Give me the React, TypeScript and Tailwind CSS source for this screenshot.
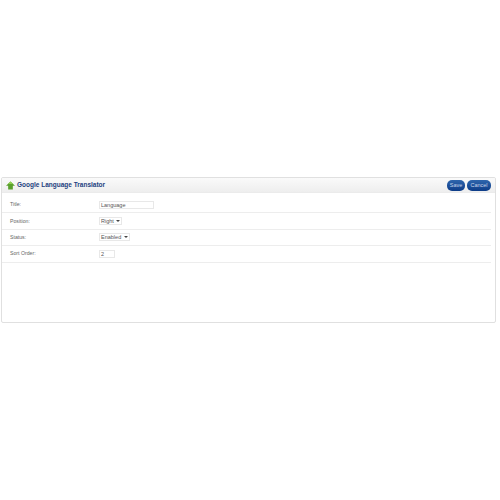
import React from 'react';

const Row = ({ label, children }: { label: string; children: React.ReactNode }) => (
  <div className="flex h-[16.4px] items-center border-b border-[#ededed] pl-[8px]">
    <div className="w-[89px] pt-[1px] text-[5.2px] text-[#666]">{label}</div>
    {children}
  </div>
);

const Select = ({ value, width }: { value: string; width: string }) => (
  <div className={`flex h-[8px] items-center justify-between border border-[#e8e8e8] bg-white pl-[1px] pr-[1px] text-[5.5px] text-[#555] ${width}`}>
    <span>{value}</span>
    <span className="h-0 w-0 border-x-[2px] border-t-[2px] border-x-transparent border-t-[#444]" />
  </div>
);

const Button = ({ label, width }: { label: string; width: string }) => (
  <div className={`flex h-[11px] items-center justify-center rounded-[5px] bg-gradient-to-b from-[#2f66ad] to-[#0d3c88] text-[5.5px] text-[#c8d6ea] ${width}`}>
    {label}
  </div>
);

export default function App() {
  return (
    <div className="h-[500px] w-[500px] bg-white pl-[1px] pt-[177px] font-['Liberation_Sans',Arial,sans-serif]">
      <div className="h-[146px] w-[495px] overflow-hidden rounded-[2px] border border-[#e0e0e0] bg-white">
        {/* Header */}
        <div className="flex h-[15px] items-center justify-between border-b border-[#ebebeb] bg-gradient-to-b from-[#fafafa] to-[#eeeeee] pl-[4px] pr-[4px]">
          <div className="flex items-center gap-[2px]">
            <svg width="9" height="9" viewBox="0 0 10 10">
              <path d="M5 0.5 L10 5.2 L7.6 5.2 L7.6 9.5 L2.4 9.5 L2.4 5.2 L0 5.2 Z" fill="#5aa02c" />
              <path d="M5 0.5 L8 3.4 L2 3.4 Z" fill="#8fcf4f" />
            </svg>
            <span className="text-[6.5px] font-bold text-[#1d3f7f]">Google Language Translator</span>
          </div>
          <div className="flex gap-[2px]">
            <Button label="Save" width="w-[18px]" />
            <Button label="Cancel" width="w-[24px]" />
          </div>
        </div>
        {/* Form */}
        <div className="pr-[4px] pt-[4px]">
          <Row label="Title:">
            <div className="flex h-[8px] w-[55px] items-center border border-[#e8e8e8] pl-[1px] text-[5.5px] text-[#555]">Language</div>
          </Row>
          <Row label="Position:">
            <Select value="Right" width="w-[23px]" />
          </Row>
          <Row label="Status:">
            <Select value="Enabled" width="w-[31px]" />
          </Row>
          <Row label="Sort Order:">
            <div className="flex h-[8px] w-[16px] items-center border border-[#e8e8e8] pl-[1px] text-[5.5px] text-[#555]">2</div>
          </Row>
        </div>
      </div>
    </div>
  );
}
